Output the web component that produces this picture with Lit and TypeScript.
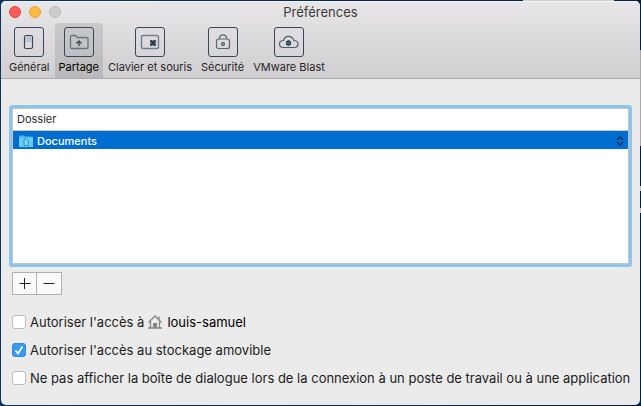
import { LitElement, html, css, svg } from "lit";
import { customElement, property, state } from "lit/decorators.js";
import { classMap } from "lit/directives/class-map.js";

const icons = {
  general: svg`<rect x="10.5" y="8.5" width="8" height="13" rx="1.5" fill="#dddde0" stroke="#2f4553" stroke-width="1.2"/><path d="M11 9h7v6h-7z" fill="#b5c6cf"/>`,
  share: svg`<path d="M6.5 20V10q0-1.5 1.5-1.5h3.500l2 2h9q1.500 0 1.500 1.500v8q0 1.500-1.500 1.500H8q-1.500 0-1.500-1.500z" fill="none" stroke="#65757f" stroke-width="1.300"/><path d="M15 19v-5.500M12.500 16.500l2.500-2.500 2.500 2.500" fill="none" stroke="#3c505d" stroke-width="1.400"/>`,
  keyboard: svg`<rect x="6.500" y="8.500" width="17" height="13" rx="1.500" fill="none" stroke="#71808a" stroke-width="1.400"/><path d="M15 13h6v6h-6z" fill="#71808a"/><path d="M15.500 13.500l5 5M20.500 13.500l-5 5" stroke="#1f3340" stroke-width="1.700"/>`,
  lock: svg`<rect x="8.500" y="12" width="13" height="9.500" rx="2" fill="none" stroke="#566873" stroke-width="1.200"/><path d="M11.500 12v-1a3.500 3.200 0 0 1 7 0v1" fill="none" stroke="#566873" stroke-width="1.200"/><circle cx="15" cy="17" r="1.400" fill="none" stroke="#3c505d" stroke-width="1.200"/>`,
  cloud: svg`<path d="M9 20.500c-2.300 0-3.500-1.500-3.500-3.400 0-2.100 1.600-3.600 4-3.600.6-2.600 2.600-4.200 5-4.200 2.700 0 4.700 1.700 5.200 4.200 2.500.1 4.300 1.500 4.300 3.600 0 2-1.300 3.400-3.500 3.400z" fill="none" stroke="#4a5e6a" stroke-width="1.200"/><circle cx="14.500" cy="16" r="1.900" fill="none" stroke="#2f4553" stroke-width="1.500"/><path d="M14.500 13v6M12 14.500l5 3M12 17.500l5-3" stroke="#2f4553" stroke-width=".6"/>`,
};

type Pane = { id: keyof typeof icons; label: string };

const panes: Pane[] = [
  { id: "general", label: "Général" },
  { id: "share", label: "Partage" },
  { id: "keyboard", label: "Clavier et souris" },
  { id: "lock", label: "Sécurité" },
  { id: "cloud", label: "VMware Blast" },
];

@customElement("pref-toolbar")
class PrefToolbar extends LitElement {
  @property() selected = "share";

  static styles = css`
    :host { display: block; }
    nav { display: flex; gap: 1px; padding: 0 4px; }
    .pane {
      display: flex; flex-direction: column; align-items: center; gap: 2px;
      padding: 4px 4px 3px; border: 0; border-radius: 4px 4px 0 0;
      background: none; color: #262626; font: 11px/16px Inter, sans-serif; white-space: nowrap;
    }
    .current { background: linear-gradient(#c9c8ca, #b9b8ba); color: #000; }
    .tile {
      display: block; width: 30px; height: 30px; box-sizing: border-box;
      border: 1px solid #34495a; border-radius: 3px;
    }
    svg { display: block; margin: -1px; }
  `;

  render() {
    return html`<nav>
      ${panes.map((p) => html`
        <button class=${classMap({ pane: true, current: p.id === this.selected })}
          @click=${() => (this.selected = p.id)}>
          <span class="tile"><svg width="30" height="30" viewBox="0 0 30 30" aria-hidden="true">${icons[p.id]}</svg></span>
          ${p.label}
        </button>`)}
    </nav>`;
  }
}

@customElement("folder-table")
class FolderTable extends LitElement {
  @property({ attribute: false }) folders = ["Documents"];

  static styles = css`
    :host {
      display: block; box-sizing: border-box; min-height: 156px;
      border: 1px solid #bfc3c6; background: #fff;
      box-shadow: 0 0 0 3px #8fc4eb; border-radius: 1px;
    }
    table { width: 100%; border-collapse: collapse; font: 11px/16px Inter, sans-serif; }
    th {
      height: 21px; padding: 0 4px; border-bottom: 1px solid #c8c8c8;
      text-align: left; font-weight: 400; color: #2b2b2b; line-height: 21px;
    }
    td { padding: 2px 4px 0 6px; background: #006dd1; color: #fff; font-weight: 500; }
    .row { display: flex; align-items: center; gap: 4px; height: 16px; }
    .name { flex: 1; }
    svg { display: block; }
  `;

  render() {
    return html`<table>
      <thead><tr><th scope="col">Dossier</th></tr></thead>
      <tbody>
        ${this.folders.map((f) => html`<tr><td><div class="row">
          <svg width="14" height="12" viewBox="0 0 14 12" aria-hidden="true">
            <path d="M0 .5h5l1 1h8V12H0z" fill="#4db8e8"/><path d="M0 3h14v9H0z" fill="#6bcbf3"/>
            <path d="M5 4h2.500l2 2v4.500H5z" fill="#7fd3f5" stroke="#2598cf"/>
          </svg>
          <span class="name">${f}</span>
          <svg width="8" height="10" viewBox="0 0 8 10" aria-hidden="true">
            <path d="M1 4l3-3 3 3M1 6l3 3 3-3" fill="none" stroke="#052c55" stroke-width="1.300"/>
          </svg>
        </div></td></tr>`)}
      </tbody>
    </table>`;
  }
}

@customElement("app-root")
class AppRoot extends LitElement {
  @state() private home = false;
  @state() private removable = true;
  @state() private hideDialog = false;

  static styles = css`
    :host {
      display: block; box-sizing: border-box; min-height: 100vh; padding: 1px;
      background:
        linear-gradient(#d0d0d2, #d0d0d2) 95% 0 / 91px 1px no-repeat,
        linear-gradient(#a8a8a8, #a8a8a8) 100% 50px / 1px 96px no-repeat,
        linear-gradient(#c4c4c4, #c4c4c4) 100% 186px / 1px 5px no-repeat,
        linear-gradient(#c4c4c4, #c4c4c4) 100% 208px / 1px 5px no-repeat,
        linear-gradient(90deg, #0b3560, #04203f);
      font-family: Inter, sans-serif; color: #1c1c1c;
    }
    .window {
      box-sizing: border-box; min-height: calc(100vh - 2px);
      border-radius: 5px; background: #ebebeb; overflow: hidden;
    }
    header {
      background: linear-gradient(#e9e6ea, #d0ced1);
      border-bottom: 1px solid #a9a8aa; box-shadow: inset 0 1px #f6f4f6;
    }
    .titlebar { display: grid; grid-template-columns: 1fr auto 1fr; align-items: center; height: 22px; }
    .lights { display: flex; gap: 8px; padding-left: 8px; }
    .light {
      width: 12px; height: 12px; box-sizing: border-box; padding: 0;
      border: 1px solid #e0443f; border-radius: 50%; background: #fc5b57;
    }
    .minimise { background: #fdbb40; border-color: #dfa036; }
    .zoom { background: #cdcccd; border-color: #b9b8b9; }
    h1 { margin: 0; font-size: 13px; line-height: 22px; font-weight: 400; color: #3a3a3a; }
    main { padding: 29px 11px 16px; }
    .edit { display: flex; margin: 8px 0 19px; }
    .edit button {
      display: grid; place-items: center; width: 25px; height: 23px; padding: 0;
      box-sizing: border-box; border: 1px solid #b0b0b0; background: #fafafa;
    }
    .edit button + button { border-left: 0; }
    .options { display: grid; gap: 12px; font-size: 13px; line-height: 16px; }
    label { display: flex; align-items: center; gap: 4px; white-space: nowrap; }
    .home { display: flex; align-items: center; gap: 5px; color: #000; }
    input {
      appearance: none; flex: none; width: 14px; height: 14px; box-sizing: border-box; margin: 0;
      border: 1px solid #bdbdbd; border-radius: 3px; background: #fff;
    }
    input:checked {
      border-color: #2a8be8;
      background: #3b99f0 url("data:image/svg+xml,%3Csvg xmlns='http://www.w3.org/2000/svg' viewBox='0 0 12 12'%3E%3Cpath d='M2.500 6.500l2.500 3 4.500-7' fill='none' stroke='white' stroke-width='1.700'/%3E%3C/svg%3E") center / 12px;
    }
  `;

  render() {
    return html`<div class="window">
      <header>
        <div class="titlebar">
          <div class="lights">
            <button class="light" aria-label="Fermer"></button>
            <button class="light minimise" aria-label="Réduire"></button>
            <button class="light zoom" aria-label="Agrandir" disabled></button>
          </div>
          <h1>Préférences</h1>
        </div>
        <pref-toolbar></pref-toolbar>
      </header>
      <main>
        <folder-table></folder-table>
        <div class="edit">
          <button aria-label="Ajouter"><svg width="12" height="12" viewBox="0 0 12 12"><path d="M.5 5.500h11M5.500 0v11" stroke="#222" fill="none"/></svg></button>
          <button aria-label="Supprimer"><svg width="12" height="12" viewBox="0 0 12 12"><path d="M.5 5.500h11" stroke="#222" fill="none"/></svg></button>
        </div>
        <div class="options">
          <label><input type="checkbox" .checked=${this.home} @change=${() => (this.home = !this.home)}>
            Autoriser l'accès à
            <span class="home">
              <svg width="14" height="14" viewBox="0 0 14 14" aria-hidden="true">
                <path d="M.5 7.500L7 1l6.500 6.500M11 5V1.500M2.500 6.500v6M11.500 6.500v6M0 13h14" fill="none" stroke="#858585" stroke-width="1.300"/>
                <path d="M5 8h4v5H5z" fill="#858585"/>
              </svg>
              louis-samuel
            </span>
          </label>
          <label><input type="checkbox" .checked=${this.removable} @change=${() => (this.removable = !this.removable)}>
            Autoriser l'accès au stockage amovible</label>
          <label><input type="checkbox" .checked=${this.hideDialog} @change=${() => (this.hideDialog = !this.hideDialog)}>
            Ne pas afficher la boîte de dialogue lors de la connexion à un poste de travail ou à une application</label>
        </div>
      </main>
    </div>`;
  }
}
